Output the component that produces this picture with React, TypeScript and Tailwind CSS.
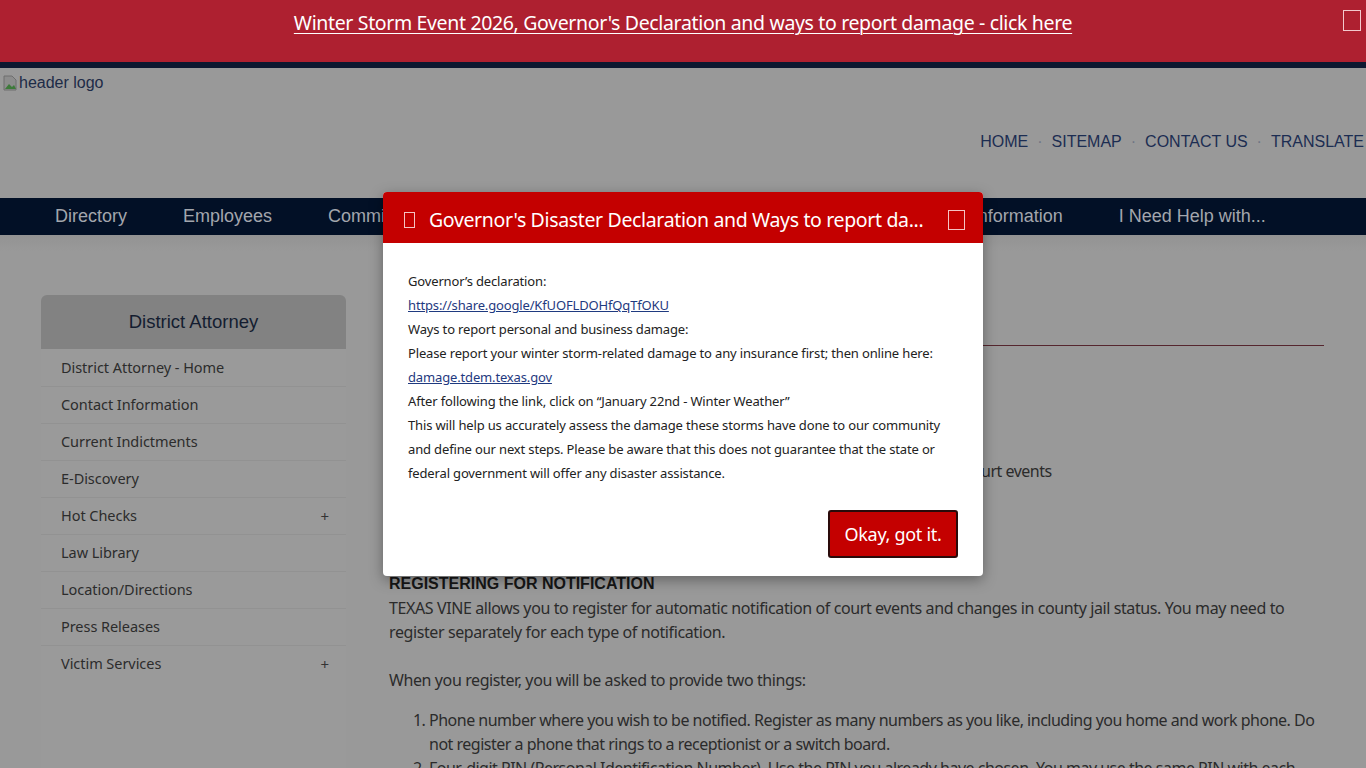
import React from "react";

const seg = { fontFamily: '"Noto Sans", "Open Sans", sans-serif' } as React.CSSProperties;
const arial = { fontFamily: '"Liberation Sans", Arial, sans-serif' } as React.CSSProperties;

function Tofu({ className }: { className: string }) {
  return <span className={"inline-block box-border " + className} />;
}

const sideItems: { label: string; plus?: boolean }[] = [
  { label: "District Attorney - Home" },
  { label: "Contact Information" },
  { label: "Current Indictments" },
  { label: "E-Discovery" },
  { label: "Hot Checks", plus: true },
  { label: "Law Library" },
  { label: "Location/Directions" },
  { label: "Press Releases" },
  { label: "Victim Services", plus: true },
];

const navItems = [
  "Directory",
  "Employees",
  "Commissioners' Court",
  "Departments",
  "Online Resources",
  "Public Information",
  "I Need Help with...",
];

export default function App() {
  return (
    <div className="relative h-[768px] w-[1366px] overflow-hidden bg-[#999999]">
      {/* Top alert banner */}
      <div className="relative h-[68px] bg-[#ae2030] border-b-[6px] border-[#0d1830]">
        <div className="flex h-[62px] items-start justify-center pt-[8px]">
          <a
            href="#"
            className="text-[19.5px] leading-[30px] text-white underline underline-offset-[3px] decoration-1 tracking-[-0.35px]"
            style={seg}
          >
            Winter Storm Event 2026, Governor's Declaration and ways to report damage - click here
          </a>
        </div>
        <Tofu className="absolute left-[1343px] top-[10px] h-[21px] w-[18px] border-[1.5px] border-[#f3c9cd]" />
      </div>

      {/* Header */}
      <div className="relative h-[130px]" style={arial}>
        <div className="flex items-center pl-[2px] pt-[5px] text-[16px] leading-[20px] text-[#1d2b47]">
          <svg width="16" height="16" viewBox="0 0 16 16" className="mr-[1px]">
            <path d="M2 1h8l4 4v10H2z" fill="#8d8d8d" stroke="#6e6e6e" strokeWidth="1" />
            <path d="M3 14l4-5 3 3 2-2 2 4z" fill="#3d7a3a" />
          </svg>
          <span>header logo</span>
        </div>
        <div className="absolute right-[2px] top-[64px] flex items-center text-[16px] leading-[20px] text-[#1c2d52]">
          <span>HOME</span>
          <span className="mx-[9px] text-[#6f7584]">·</span>
          <span>SITEMAP</span>
          <span className="mx-[9px] text-[#6f7584]">·</span>
          <span>CONTACT US</span>
          <span className="mx-[9px] text-[#6f7584]">·</span>
          <span>TRANSLATE</span>
        </div>
      </div>

      {/* Main nav */}
      <div className="flex h-[37px] items-center bg-[#021026] pl-[27px]" style={arial}>
        {navItems.map((n) => (
          <span key={n} className="px-[28px] text-[18px] leading-[37px] text-[#a2a6ad] whitespace-nowrap">
            {n}
          </span>
        ))}
      </div>
      <div className="h-[16px] bg-gradient-to-b from-[#939393] to-[#999999]" />

      {/* Body */}
      <div className="flex pl-[41px] pt-[44px]">
        {/* Sidebar */}
        <div className="w-[305px] shrink-0 overflow-hidden rounded-[6px] bg-[#9a9a9a]">
          <div
            className="flex h-[54px] items-center justify-center bg-[#828282] text-[18.5px] text-[#141d30]"
            style={arial}
          >
            District Attorney
          </div>
          {sideItems.map((it, i) => (
            <div
              key={it.label}
              className={
                "flex h-[37px] items-center justify-between pl-[20px] pr-[17px] text-[14.5px] text-[#2c2c2c] " +
                (i > 0 ? "border-t border-[#929292]" : "")
              }
              style={seg}
            >
              <span className="tracking-[-0.05px]">{it.label}</span>
              {it.plus && <span className="text-[15px] text-[#333]">+</span>}
            </div>
          ))}
        </div>

        {/* Content */}
        <div className="ml-[43px] w-[935px] text-[16px] leading-[24px] text-[#2b2b2b]" style={seg}>
          <div className="h-[51px] border-b border-[#55262e]">
            <h1 className="pt-[6px] text-[26px] text-[#3a0c14]" style={arial}>
              TEXAS VINE
            </h1>
          </div>
          <div className="mt-[41px] tracking-[-0.4px]">
            <div className="font-bold" style={arial}>
              What is VINE?
            </div>
            <div>VINE (Victim Information and Notification Everyday)</div>
            <div>is a free service for crime victims and the public.</div>
            <div className="whitespace-nowrap tracking-[-0.5px]">
              The service provides crime victims and others with information and notification of court events
            </div>
          </div>
          <h2 className="mt-[91px] text-[16px] font-bold leading-[20px] text-[#161616]" style={arial}>
            REGISTERING FOR NOTIFICATION
          </h2>
          <p className="mt-[2px] tracking-[-0.4px]">
            TEXAS VINE allows you to register for automatic notification of court events and changes in county jail
            status. You may need to register separately for each type of notification.
          </p>
          <p className="mt-[24px] tracking-[-0.4px]">When you register, you will be asked to provide two things:</p>
          <ol className="mt-[16px] list-decimal pl-[40px] tracking-[-0.5px]">
            <li>
              Phone number where you wish to be notified. Register as many numbers as you like, including you home and
              work phone. Do not register a phone that rings to a receptionist or a switch board.
            </li>
            <li>
              Four-digit PIN (Personal Identification Number). Use the PIN you already have chosen. You may use the same
              PIN with each registration.
            </li>
          </ol>
        </div>
      </div>

      {/* Modal */}
      <div
        className="absolute left-[383px] top-[192px] w-[600px] overflow-hidden rounded-[4px] bg-white shadow-[0_4px_14px_rgba(0,0,0,0.35)]"
        style={seg}
      >
        <div className="flex h-[51px] items-center bg-[#c40000] pl-[21px] pr-[18px] pt-[5px]">
          <Tofu className="h-[16px] w-[11px] border border-[#f5c3c3]" />
          <span className="ml-[14px] flex-1 whitespace-nowrap text-[19.5px] tracking-[-0.35px] text-white">
            Governor's Disaster Declaration and Ways to report da...
          </span>
          <Tofu className="h-[20px] w-[17px] border-[1.5px] border-[#f5c3c3]" />
        </div>
        <div className="px-[25px] pt-[26px] text-[13px] leading-[24px] text-[#222] tracking-[-0.15px]">
          <div>Governor’s declaration:</div>
          <div>
            <a href="#" className="text-[#1f3a80] underline">
              https://share.google/KfUOFLDOHfQqTfOKU
            </a>
          </div>
          <div>Ways to report personal and business damage:</div>
          <div>Please report your winter storm-related damage to any insurance first; then online here:</div>
          <div>
            <a href="#" className="text-[#1f3a80] underline">
              damage.tdem.texas.gov
            </a>
          </div>
          <div>After following the link, click on “January 22nd - Winter Weather”</div>
          <div>
            This will help us accurately assess the damage these storms have done to our community and define our next
            steps. Please be aware that this does not guarantee that the state or federal government will offer any
            disaster assistance.
          </div>
        </div>
        <div className="flex justify-end px-[25px] pb-[18px] pt-[25px]">
          <button className="h-[48px] w-[130px] rounded-[3px] border-2 border-[#2a0a0a] bg-[#c40000] text-[18px] text-white tracking-[-0.3px]">
            Okay, got it.
          </button>
        </div>
      </div>
    </div>
  );
}
